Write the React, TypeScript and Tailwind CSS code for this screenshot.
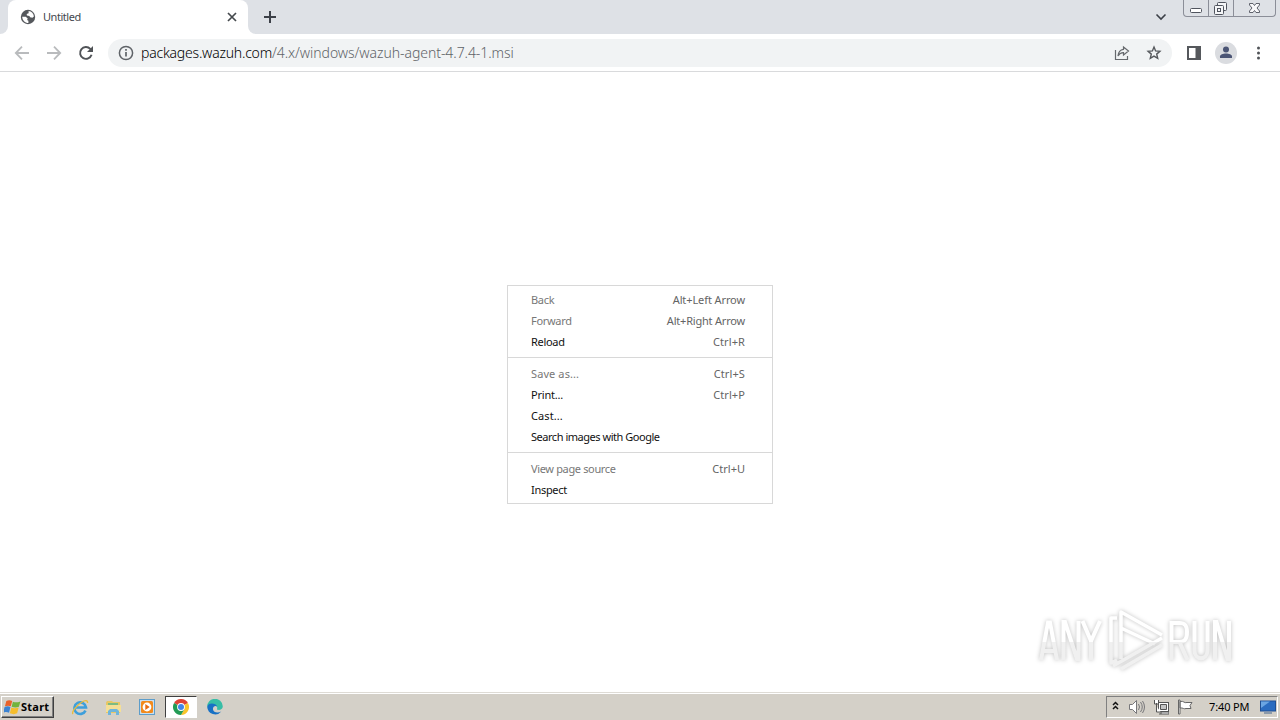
import React from "react";

type Item = { label: string; keys?: string; off?: boolean; fit: string; keyFit?: string };

const groups: Item[][] = [
  [
    { label: "Back", keys: "Alt+Left Arrow", off: true, fit: "tracking-[-0.3px]", keyFit: "tracking-[-0.1px]" },
    { label: "Forward", keys: "Alt+Right Arrow", off: true, fit: "tracking-[-0.3px]", keyFit: "tracking-[-0.2px]" },
    { label: "Reload", keys: "Ctrl+R", fit: "tracking-[-0.3px]", keyFit: "tracking-[0.1px]" },
  ],
  [
    { label: "Save as...", keys: "Ctrl+S", off: true, fit: "tracking-[0.1px]", keyFit: "tracking-[0.1px]" },
    { label: "Print...", keys: "Ctrl+P", fit: "tracking-[-0.2px]", keyFit: "tracking-[0.1px]" },
    { label: "Cast...", fit: "tracking-[0.1px]" },
    { label: "Search images with Google", fit: "tracking-[-0.47px]" },
  ],
  [
    { label: "View page source", keys: "Ctrl+U", off: true, fit: "tracking-[-0.35px]", keyFit: "tracking-normal" },
    { label: "Inspect", fit: "tracking-[-0.3px]" },
  ],
];

function TabStrip() {
  return (
    <div className="flex h-[34px] shrink-0 bg-[#dee1e6]">
      <div className="w-2 bg-white">
        <div className="h-full rounded-br-lg bg-[#dee1e6]" />
      </div>
      <div className="flex w-60 items-center rounded-t-lg bg-white pl-3 pr-2.5">
        <svg className="h-4 w-4" viewBox="0 0 16 16">
          <circle cx="8" cy="8" r="7.2" fill="#55585c" />
          <path d="M2.200 7.800h3.600l1.900 1.700-.6 1.400 1.300.8v2.400c-3.300 0-6.100-2.600-6.200-6.300ZM8.600 2.100c3 .3 5.100 2.600 5.300 5.300l-1.500 1.300-2.300-.4-.7-1.400-2.500-.3-.2-1.700 1.900-.6Z" fill="#fff" />
        </svg>
        <span className="ml-[7px] text-[11px] tracking-[-0.45px] text-[#45494e]">Untitled</span>
        <svg className="ml-auto h-3 w-3" viewBox="0 0 12 12" stroke="#45494d" strokeWidth="1.7">
          <path d="m2 2 8 8M10 2 2 10" />
        </svg>
      </div>
      <div className="w-2 bg-white">
        <div className="h-full rounded-bl-lg bg-[#dee1e6]" />
      </div>
      <svg className="ml-[7px] mt-[10px] h-[14px] w-[14px]" viewBox="0 0 14 14" stroke="#3c4048" strokeWidth="2">
        <path d="M7 1v12M1 7h12" />
      </svg>
      <svg className="ml-auto mt-[12px] h-[10px] w-3" viewBox="0 0 12 10" fill="none" stroke="#3c4048" strokeWidth="1.6">
        <path d="m1.500 2.500 4.500 4.500 4.500-4.500" />
      </svg>
      <div className="ml-4 mr-1 flex h-[17px] w-[93px] rounded-b-[4px] border border-t-0 border-[#8b8e98]">
        <div className="w-[25px] border-r border-[#8b8e98]">
          <svg width="24" height="16" fill="#fff" stroke="#50545e"><rect x="6.500" y="8.500" width="11" height="4" rx="1" /></svg>
        </div>
        <div className="w-[25px] border-r border-[#8b8e98]">
          <svg width="24" height="16" fill="#f5f6f8" stroke="#50545e">
            <rect x="8.500" y="2.500" width="9" height="8" rx="1" />
            <rect x="5.500" y="5.500" width="9" height="9" rx="1" />
            <rect x="8.500" y="8.500" width="3" height="3" />
          </svg>
        </div>
        <svg width="41" height="16" fill="#f8f8fa" stroke="#50545e" strokeWidth="0.9">
          <path d="M15.500 3.500h3.500l1.500 2 1.500-2h3.500v1.500l-2.500 3 2.500 3v1.500H22l-1.500-2-1.500 2h-3.500V11l2.500-3-2.500-3Z" />
        </svg>
      </div>
    </div>
  );
}

function Toolbar() {
  return (
    <div className="flex h-[38px] shrink-0 items-center border-b border-[#d9dadc] bg-white pl-[14px] pr-[14px]">
      <svg className="h-4 w-4" viewBox="0 0 16 16" fill="none" stroke="#b9bbbd" strokeWidth="1.8"><path d="M15 8H2M8 1.700 1.800 8 8 14.300" /></svg>
      <svg className="ml-4 h-4 w-4" viewBox="0 0 16 16" fill="none" stroke="#b9bbbd" strokeWidth="1.800"><path d="M1 8h13M8 1.700 14.200 8 8 14.300" /></svg>
      <svg className="ml-4 h-4 w-4" viewBox="0 0 16 16" fill="none" stroke="#505357" strokeWidth="1.900"><path d="M13.600 9.800A5.900 5.900 0 1 1 12.300 3.900L14 5.500" /><path d="M15 1v6H9Z" fill="#505357" stroke="none" /></svg>
      <div className="ml-[14px] flex h-7 w-[1064px] items-center rounded-full bg-[#f1f3f4] pl-[10px] pr-[10px]">
        <svg className="h-4 w-4 shrink-0" viewBox="0 0 16 16" fill="none" stroke="#5f6368"><circle cx="8" cy="8" r="6.600" strokeWidth="1.500" /><path d="M8 7v4.500M8 4v1.700" strokeWidth="1.700" /></svg>
        <span className="ml-[7px] whitespace-nowrap text-[14px] font-light leading-5 tracking-[-0.06px] text-[#5f6368]"><span className="tracking-[-0.22px] text-black">packages.wazuh.com</span>/4.x/windows/wazuh-agent-4.7.4-1.msi</span>
        <svg className="ml-auto h-4 w-4" viewBox="0 0 16 16" fill="none" stroke="#66696d" strokeWidth="1.200"><path d="M1.500 5v9.500h12V11M9.500 2l5 4-5 4V7.700C7 7.600 5.300 8.800 4 11c.3-3.600 2.200-6.300 5.500-6.700Z" /></svg>
        <svg className="ml-4 h-4 w-4" viewBox="0 0 16 16" fill="none" stroke="#55585c" strokeWidth="1.400"><path d="m8 2 1.600 3.900 4.300.4-3.200 2.800 1 4.200L8 11.100l-3.700 2.200 1-4.200-3.200-2.800 4.300-.4Z" /></svg>
      </div>
      <svg className="ml-[15px] h-[14px] w-[14px]" viewBox="0 0 14 14"><path fillRule="evenodd" d="M0 0h14v14H0ZM2 2v10h6.500V2Z" fill="#55585c" /></svg>
      <div className="ml-[14px] h-[22px] w-[22px] overflow-hidden rounded-full bg-[#dadce0]">
        <svg viewBox="0 0 22 22" fill="#4b5575"><circle cx="11" cy="7.500" r="3" /><path d="M5 16v-1.500C5 12.500 8 11.500 11 11.500s6 1 6 3V16Z" /></svg>
      </div>
      <svg className="ml-auto h-4 w-4" viewBox="0 0 16 16" fill="#505357"><circle cx="8.500" cy="3" r="1.500" /><circle cx="8.500" cy="8" r="1.500" /><circle cx="8.500" cy="13" r="1.500" /></svg>
    </div>
  );
}

function ContextMenu() {
  return (
    <div className="h-[219px] w-[266px] border border-[#d8d8d8] bg-white pt-1 text-[11px]">
      {groups.map((g, i) => (
        <div key={i} className={i ? "mt-1 border-t border-[#d8d8d8] pt-1.5" : ""}>
          {g.map((it) => (
            <div key={it.label} className={`flex h-[21px] items-center justify-between whitespace-nowrap pl-[23px] pr-[27px] ${it.off ? "text-[#777]" : "text-[#111]"}`}>
              <span className={it.fit}>{it.label}</span>
              {it.keys && <span className={`text-[#646464] ${it.keyFit}`}>{it.keys}</span>}
            </div>
          ))}
        </div>
      ))}
    </div>
  );
}

function Watermark() {
  return (
    <svg className="h-[80px] w-[230px] drop-shadow-[0_0_2px_rgba(0,0,0,0.25)]" viewBox="0 0 230 80">
      <defs>
        <linearGradient id="wm" gradientUnits="userSpaceOnUse" x1="0" y1="0" x2="0" y2="80"><stop offset="0.520" stopColor="#fff" /><stop offset="0.520" stopColor="#f0f0f0" /></linearGradient>
      </defs>
      <g fill="none" stroke="url(#wm)" strokeWidth="4">
        <path d="M21 60 28 22.500h2l7 37.500M23.500 51h11M43.500 60V22h1.500l12 37h1.500V21M62.500 21l8.500 20 9-20M71 40v20" />
        <path d="M151.500 60V23h8c6 0 7.500 3 7.500 9s-1.500 10-7.500 10h-8m8 0 8 18M174.500 21v29c0 11 13 11 13 0V21M195 60V22h1.500l11 37h1.500V21" />
        <path d="M101 59V12l41 23M97 18h-6v45l6-3M101 28l34 16M93 66l49-28M101 69l41-24" strokeWidth="3.500" strokeLinejoin="round" />
      </g>
    </svg>
  );
}

function Taskbar() {
  return (
    <div className="flex h-[28px] shrink-0 items-end border-t border-[#dedbd5] bg-[#d4d0c8] shadow-[inset_0_1px_0_#fff]">
      <div className="mb-[2px] ml-px flex h-[22px] w-[53px] items-center border border-b-[#404040] border-l-white border-r-[#404040] border-t-white pl-[2px] shadow-[inset_-1px_-1px_0_#808080]">
        <svg className="h-[17px] w-[17px] shrink-0" viewBox="1 1 14.500 14">
          <path d="M3 2.500c2-1 3.500-.7 5 0L6.800 7c-1.800-.8-3-.7-5 0Z" fill="#e9622b" />
          <path d="M8.600 3c2 .8 3.700.7 6.400-.2L13.700 7.400c-2 .9-3.700.9-6.200 0Z" fill="#72b33d" />
          <path d="M1.500 7.600c2-.8 3.500-.7 5 0l-1.200 4.900c-1.800-.8-3.400-.7-5.100 0Z" fill="#3c83d2" />
          <path d="M7.300 8c2 .8 3.800.8 6.200-.1l-1.300 5.100c-2 .9-3.800.9-6.200 0Z" fill="#f5bd2c" />
        </svg>
        <span className="text-[11px] font-bold tracking-[0.25px] text-black">Start</span>
      </div>
      <div className="mb-[2px] ml-[17px] flex h-[22px] items-center">
        <svg className="h-[18px] w-[18px]" viewBox="0 0 18 18" fill="none">
          <path d="M14.500 12.600A5.800 5.800 0 1 1 15 9.500H5" stroke="#3e9fdb" strokeWidth="2.600" />
          <path d="M2 16c-2-2 4-9 9-12 3-2 6-2 5.500 1" stroke="#e9bc3d" strokeWidth="1.400" />
        </svg>
        <svg className="ml-[16px] h-[17px] w-[17px]" viewBox="0 0 17 17">
          <path d="M1 3.500 2 2h5l1 1h7v11H1Z" fill="#e8c764" /><path d="M3 4h10v3H3Z" fill="#7dbb82" /><path d="M1 6h15v7H1Z" fill="#f5df96" /><path d="M3 16v-4l2-2h7l2 2v4h-3v-3H6v3Z" fill="#6fb5db" />
        </svg>
        <svg className="ml-[17px] h-4 w-4" viewBox="0 0 16 16">
          <rect x=".5" y=".5" width="15" height="15" fill="#c9dff0" stroke="#5d9dca" /><rect x="2" y="2" width="12" height="12" rx="1.500" fill="#f28a1c" /><circle cx="8" cy="8" r="4.400" fill="#fff" /><path d="m6.300 5 4.400 3-4.400 3Z" fill="#e76c12" />
        </svg>
        <div className="ml-[10px] flex h-[22px] w-8 items-center justify-center border border-b-white border-l-[#404040] border-r-white border-t-[#404040] bg-white">
          <svg className="h-4 w-4" viewBox="0 0 16 16">
            <path d="M8 8 1.070 4A8 8 0 0 1 14.930 4Z" fill="#df4335" /><path d="M8 8l6.930-4A8 8 0 0 1 8 16l3.400-6Z" fill="#f9c42b" /><path d="M8 8l3.500 2L8 16A8 8 0 0 1 1.070 4Z" fill="#239b55" /><circle cx="8" cy="8" r="3.900" fill="#fff" /><circle cx="8" cy="8" r="3" fill="#4285e8" />
          </svg>
        </div>
        <svg className="ml-[10px] h-4 w-4" viewBox="0 0 16 16">
          <path d="M.2 8A7.800 7.800 0 0 1 15.800 7.200c0 3-2.800 4-5 3.600-1.300-.3-.6-1-.5-2C10 5.500 2.500 4.500.2 8Z" fill="#37bda6" /><path d="M.2 8C1 3 9 4 10.200 7.500 8 6 5.500 8 6 10.500c.5 3 4.500 4 8.300 2A8 8 0 0 1 .2 8Z" fill="#1871c5" />
        </svg>
      </div>
      <div className="mb-[2px] ml-auto mr-[2px] flex h-[22px] w-[172px] items-center border border-b-white border-l-[#808080] border-r-white border-t-[#808080]">
        <svg className="mb-0.5 ml-[5px] h-3 w-[7px]" viewBox="0 0 7 12" fill="none" stroke="#111" strokeWidth="1.500"><path d="m1 5 2.500-2.500L6 5M1 9l2.500-2.500L6 9" /></svg>
        <svg className="ml-[10px] h-4 w-4" viewBox="0 0 16 16" fill="#fff" stroke="#77777a"><path d="M.5 5.500h3l4-4v13l-4-4h-3Z" /><path d="M9.500 5q2 3 0 6M11.500 3q3.500 5 0 10M13.500 2q4 6 0 12" fill="none" /></svg>
        <svg className="ml-[8px] h-4 w-4" viewBox="0 0 16 16" fill="#fff" stroke="#555"><rect x="5.500" y="3.500" width="10" height="9" /><path d="M7.500 5.500h6v5h-6Z" fill="#c4c4c4" /><path d="M6 15h10v-2H8v2M3.500 7v6h4M1.500 1v4h4V1M3.500 4v3" /></svg>
        <svg className="ml-[8px] h-4 w-4" viewBox="0 0 16 16" fill="#fff" stroke="#666"><path d="M1.500 1h1.500v14H1.500ZM3 2.500c4-1 4 2 7 1h5l-2 3 1 3H9c-2 1-3-1-6-.5Z" /></svg>
        <span className="ml-4 whitespace-nowrap text-[11px] tracking-[-0.12px] text-black">7:40 PM</span>
        <svg className="ml-auto mr-[1px] h-[14px] w-4" viewBox="0 0 16 14"><rect x=".5" y="1" width="15" height="10" fill="#2b6cc0" stroke="#204f93" /><path d="M1 1.500h9L1 8Z" fill="#6ba5e2" /><path d="M4 13h8" stroke="#45658c" /></svg>
      </div>
    </div>
  );
}

export default function App() {
  return (
    <div className="flex h-[720px] w-[1280px] flex-col overflow-hidden bg-white font-['Noto_Sans',sans-serif]">
      <TabStrip />
      <Toolbar />
      <main className="relative flex-1">
        <div className="absolute left-[507px] top-[213px]"><ContextMenu /></div>
        <div className="absolute left-[1020px] top-[528px]"><Watermark /></div>
      </main>
      <Taskbar />
    </div>
  );
}
